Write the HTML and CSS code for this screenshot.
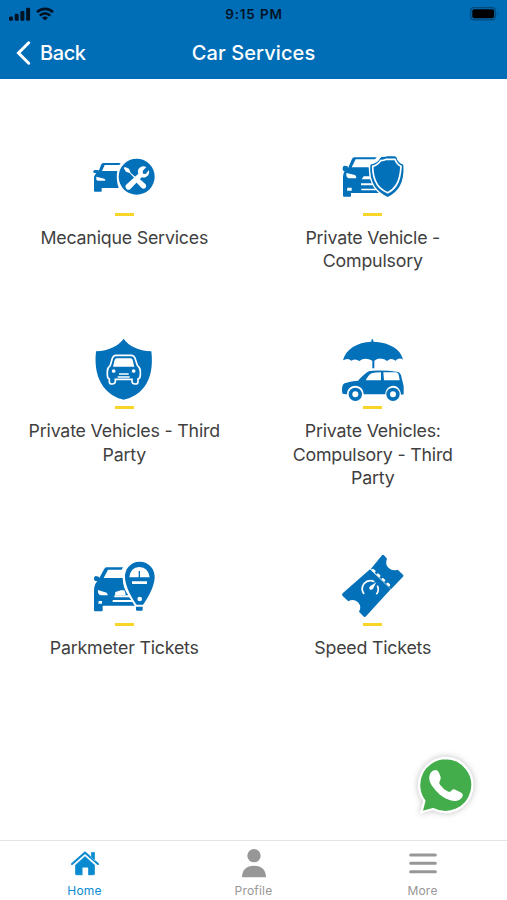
FILE: index.html
```html
<!DOCTYPE html>
<html lang="en">
<head>
  <meta charset="UTF-8" />
  <meta name="viewport" content="width=device-width, initial-scale=1.0"/>
  <title>Car Services</title>
  <link rel="stylesheet" href="styles.css">
</head>
<body>
  <div class="app">
    <header class="header">
      <div class="status-bar">
        <div class="signals">
          <svg class="cell" viewBox="0 0 22 14">
            <rect x="0" y="9.5" width="4" height="4.2" rx="1.2"/>
            <rect x="5.7" y="6.8" width="4" height="6.9" rx="1.2"/>
            <rect x="11.4" y="4" width="4" height="9.7" rx="1.2"/>
            <rect x="17.1" y="0.8" width="4" height="12.9" rx="1.2"/>
          </svg>
          <svg class="wifi" viewBox="0 0 18 14">
            <path class="wave" d="M1 5.1a11.5 11.5 0 0 1 16 0M3.8 8.6a7.4 7.4 0 0 1 10.4 0"/>
            <path d="M9 13.6 6 10.7a4.2 4.2 0 0 1 6 0z"/>
          </svg>
        </div>
        <span class="time">9:15 PM</span>
        <svg class="battery" viewBox="0 0 29 14">
          <rect class="shell" x="0.7" y="0.7" width="24.6" height="12.2" rx="3.5"/>
          <rect x="2.3" y="2.3" width="21.8" height="9" rx="2"/>
          <path class="cap" d="M27 4.7q1.6 2 0 4z"/>
        </svg>
      </div>
      <nav class="nav">
        <a class="back">
          <svg viewBox="0 0 15 24"><path d="M12.7 1.8 2.5 12l10.2 10.2"/></svg>
          <span>Back</span>
        </a>
        <h1>Car Services</h1>
      </nav>
    </header>

    <main class="services">
      <div class="service">
        <svg class="icon" viewBox="0 0 240 204">
          <path d="M43 81 52 58q2-4 7-4h51l-4 6H62L54 78h46q-5 24 4 51H53v9q0 2-2 2H33q-3 0-3-3V98q0-5 4-10l3-4h-7q-3-1-2-5 1-4 5-4h11z"/>
          <path class="cut" d="M37 95l24 6q3 1 3 6H42q-5 0-5-4z"/>
          <circle cx="158" cy="95" r="54"/>
          <path class="cut" d="M123 66l12 5 5 12 15 14 8 1 22 20q4 6-1 11t-11 0l-20-21-2-9-14-15-11-4-7-11z"/>
          <path class="cut" d="M187 66l-11 12 1 8 8 1 10-12q3 15-9 21-6 3-13 1l-33 34q-7 7-13 0-6-7 1-13l35-32q-4-9 3-17 8-8 21-3z"/>
        </svg>
        <span class="dash"></span>
        <p>Mecanique Services</p>
      </div>

      <div class="service">
        <svg class="icon" viewBox="0 0 240 204">
          <path d="M45 70 57 42q2-5 7-5h67l-5 6H68L56 67h51q2 30 10 48H84v6h37l8 10H85v5h47l6 8H54v8q0 3-3 3H33q-3 0-3-3V94q0-9 5-16h-3q-4-2-3-9 1-7 6-7l9 2z"/>
          <path class="cut" d="M40 84l26 6q4 2 4 10H47q-7-2-7-9zM92 94h18l5 9H86zM43 128h13v9H42z"/>
          <path d="M163 34q5 4 13 4 8 0 13-4 4 20 22 25 3 39-11 65-11 20-36 32-26-12-39-32-16-27-13-65 20-6 27-23 3-2 6-2z" class="outer"/>
          <path d="M145 36q10 1 18-2h22q3 2 5 2 4 18 21 23 3 39-11 65-11 20-36 32-26-12-39-32-16-27-13-65 25-5 33-23z"/>
          <path class="line" d="M143 47q10 0 17-4h26q5 15 18 21-2 37-14 56-9 15-26 23-20-9-31-24-14-22-14-55 16-4 24-17z"/>
        </svg>
        <span class="dash"></span>
        <p>Private Vehicle - Compulsory</p>
      </div>

      <div class="service">
        <svg class="icon" viewBox="0 16 240 204">
          <path d="M119 18q23 34 83 38 8 69-22 108-23 30-61 37-38-8-61-39-29-39-22-106 58-4 83-38z"/>
          <path class="line" d="M96 68h46q8 0 11 9l7 21q9 7 9 18v10q0 11-7 13v8q0 7-9 7-8 0-9-7v-7h-50v7q-1 7-9 7-9 0-9-7v-8q-6-2-6-13v-10q0-11 9-18l6-21q3-9 11-9z"/>
          <path class="cut" d="M98 77h42q5 0 6 5l5 20H87l5-20q2-5 6-5zM105 122h29v4h-29zM101 131h36v4h-36z"/>
          <circle class="cut" cx="89" cy="115" r="5.5"/><circle class="cut" cx="149" cy="115" r="5.5"/>
        </svg>
        <span class="dash"></span>
        <p>Private Vehicles - Third Party</p>
      </div>

      <div class="service">
        <svg class="icon" viewBox="0 16 240 204">
          <path d="M118 20q3 0 3 4v3c47 2 83 22 89 54q-9-6-17-1-3 1-5 4-12-9-22-2l-4 3q-9-8-18-7-10-1-20 6v23h-6V84q-10-6-21-6-9 0-18 7-12-9-24-1-8-7-16-4l-9 3c8-34 43-54 85-56v-3q0-4 3-4z"/>
          <path d="M31 184q-5-2-4-12 0-17 8-20 8-5 40-8 10-12 25-24 6-6 18-6 41-2 73 3 10 1 13 11 6 24 8 33v24l-8 1c-1-17-12-27-23-27-13 0-24 11-24 26H92c0-14-10-26-25-26-13 0-25 10-25 26z"/>
          <path class="cut" d="M98 143q10-19 20-22 8-2 26-2v24zM151 119h38q7 1 9 11l2 13h-47z"/>
          <circle cx="67" cy="185" r="20"/><circle class="cut" cx="67" cy="185" r="9"/>
          <circle cx="180" cy="185" r="20"/><circle class="cut" cx="180" cy="185" r="9"/>
        </svg>
        <span class="dash"></span>
        <p>Private Vehicles: Compulsory - Third Party</p>
      </div>

      <div class="service">
        <svg class="icon" viewBox="0 14 240 204">
          <path d="M46 83 61 55q3-4 8-4h48l-4 7H72L59 83h57q1 31 17 52H91v6h45l8 8H86v6h62l6 11H56v14q0 3-3 3H33q-3 0-3-3v-58q0-20 10-30h-6q-5-2-4-8 0-6 5-7l9 2z"/>
          <path class="cut" d="M42 119l26 8 4 8H51q-7-1-9-8zM94 125l17-5h10l4 11q0 4-5 4H93zM44 152h10v8H43z"/>
          <path class="halo" d="M167 33c-28 0-46 23-44 49 2 28 21 62 35 82h19c14-20 33-54 35-82 2-26-17-49-45-49z"/>
          <path d="M167 34c-28 0-46 23-44 49 2 28 21 62 35 80h19c14-18 33-52 35-80 2-26-17-49-45-49zM156 169h20v9q0 3-3 3h-14q-3 0-3-3z"/>
          <path class="cut" d="M136 81q3-30 30-31 27 1 31 31zM144 93h45v8h-45z"/>
          <path class="needle" d="M166 62v21"/>
          <circle class="cut" cx="167" cy="146" r="7"/>
        </svg>
        <span class="dash"></span>
        <p>Parkmeter Tickets</p>
      </div>

      <div class="service">
        <svg class="icon" viewBox="0 14 240 204">
          <path d="M114 55l33-40q3-3 6 0l9 10q-7 17 5 28 12 11 27 5l16 15q3 3 0 6l-36 38z"/>
          <path d="M111 57l62 60-74 81q-4 4-8 0l-13-14q9-14-3-28-14-13-29-3l-17-16q-4-4 0-8z"/>
          <path class="perf" d="M120 59l52 49"/>
          <path class="gauge" d="M93 131q-11-17 0-31 13-14 31-6M133 106q7 14-3 26"/>
          <path class="cut" d="M130 96l-9 18q-4 6-10 4-5-5 0-10z"/>
        </svg>
        <span class="dash"></span>
        <p>Speed Tickets</p>
      </div>
    </main>

    <a class="whatsapp">
      <svg viewBox="0 0 270 270">
        <path class="bubble" d="M137 54a81 81 0 1 1-38 153l-35 10 9-34A81 81 0 0 1 137 54z"/>
        <path class="phone" d="M92 98q5-8 15-8 7 1 10 8l5 13q1 7-3 13-3 5 1 10 10 14 25 21 5 2 9-3 5-6 12-3l18 9q6 4 4 11-6 14-25 14c-25-1-49-21-61-38-15-18-18-34-10-47z"/>
      </svg>
    </a>

    <footer class="tabs">
      <a class="tab active">
        <svg viewBox="0 0 90 90">
          <path class="roof" d="M6 51 45 17l39 34"/>
          <path d="M63 15h12v27L63 31zM15 54l30-27 30 27v26q0 5-5 5H54V62H38v23H20q-5 0-5-5z"/>
        </svg>
        <span>Home</span>
      </a>
      <a class="tab">
        <svg viewBox="0 0 90 90">
          <circle cx="45" cy="26" r="20"/>
          <path d="M9 91q1-35 36-35t36 35z"/>
        </svg>
        <span>Profile</span>
      </a>
      <a class="tab">
        <svg viewBox="0 0 90 90">
          <path class="bars" d="M8 24h74M8 49h74M8 74h74"/>
        </svg>
        <span>More</span>
      </a>
    </footer>
  </div>
</body>
</html>
```

FILE: styles.css
```css
* { margin: 0; padding: 0; box-sizing: border-box; }
body { background: #fff; font-family: Inter, "Liberation Sans", sans-serif; overflow: hidden; }
svg { display: block; overflow: visible; }
.app { position: relative; height: 900px; display: flex; flex-direction: column; }

.header { height: 79px; background: #006eb7; flex: none; }
.status-bar {
  height: 27px; padding: 0 8px 0 9px;
  display: grid; grid-template-columns: 1fr auto 1fr; align-items: center;
  color: #001324; fill: #001324;
}
.signals { display: flex; gap: 5px; }
.cell { width: 22px; height: 14px; }
.wifi { width: 18px; height: 14px; }
.wave { fill: none; stroke: #001324; stroke-width: 2.7; }
.time { font-size: 13.5px; font-weight: 600; letter-spacing: 0.85px; }
.battery { width: 29px; height: 14px; justify-self: end; fill: #000; }
.battery .shell { fill: none; stroke: #004878; stroke-width: 1.2; }
.battery .cap { fill: #004878; }
.nav {
  height: 52px; padding: 0 16px;
  display: grid; grid-template-columns: 1fr auto 1fr; align-items: center;
  color: #fff;
}
.back { display: flex; align-items: center; gap: 9px; font-size: 20px; font-weight: 500; letter-spacing: -0.4px; }
.back svg { width: 15px; height: 24px; fill: none; stroke: #fff; stroke-width: 3; stroke-linecap: round; }
.nav h1 { font-size: 20px; font-weight: 500; letter-spacing: 0.1px; }

.services {
  flex: 1; padding: 66px 10px 0 0;
  display: grid; grid-template-columns: 1fr 1fr; align-content: start; row-gap: 66px;
}
.service { display: flex; flex-direction: column; align-items: center; }
.icon { width: 80px; height: 68px; fill: #0370ba; }
.icon .cut { fill: #fff; }
.icon .line { fill: none; stroke: #fff; stroke-width: 5; }
.icon .outer { stroke: #fff; stroke-width: 8; }
.icon .halo { fill: #fff; stroke: #fff; stroke-width: 12; }
.icon .needle { fill: none; stroke: #0370ba; stroke-width: 4; }
.icon .perf { fill: none; stroke: #fff; stroke-width: 7; stroke-linecap: round; stroke-dasharray: 6 14; }
.icon .gauge { fill: none; stroke: #fff; stroke-width: 5; }
.dash { width: 19px; height: 3px; background: #fad529; }
.service p {
  width: 204px; margin-top: 10px;
  color: #3f3f3f; font-size: 17.8px; line-height: 23.2px; text-align: center; letter-spacing: -0.2px;
}

.whatsapp { position: absolute; left: 400px; top: 740px; width: 90px; height: 90px; }
.whatsapp svg { filter: drop-shadow(0 0 3px rgba(0,0,0,0.25)); }
.bubble { fill: #43ad4b; stroke: #fff; stroke-width: 7; stroke-linejoin: round; }
.phone { fill: #fff; }

.tabs { height: 60px; flex: none; display: flex; border-top: 1px solid #e4e4e4; background: #fff; }
.tab {
  flex: 1; padding-top: 6px;
  display: flex; flex-direction: column; align-items: center; gap: 6px;
  color: #979797; fill: #979797; font-size: 12px; line-height: 15px; letter-spacing: 0.2px;
}
.tab svg { width: 30px; height: 30px; }
.tab.active { color: #0a8ad0; fill: #0a8ad0; }
.roof { fill: none; stroke: #0a8ad0; stroke-width: 6; stroke-linecap: round; }
.tab.active path:last-child { stroke: #fff; stroke-width: 1; }
.bars { stroke: #979797; stroke-width: 9; stroke-linecap: round; }
```
